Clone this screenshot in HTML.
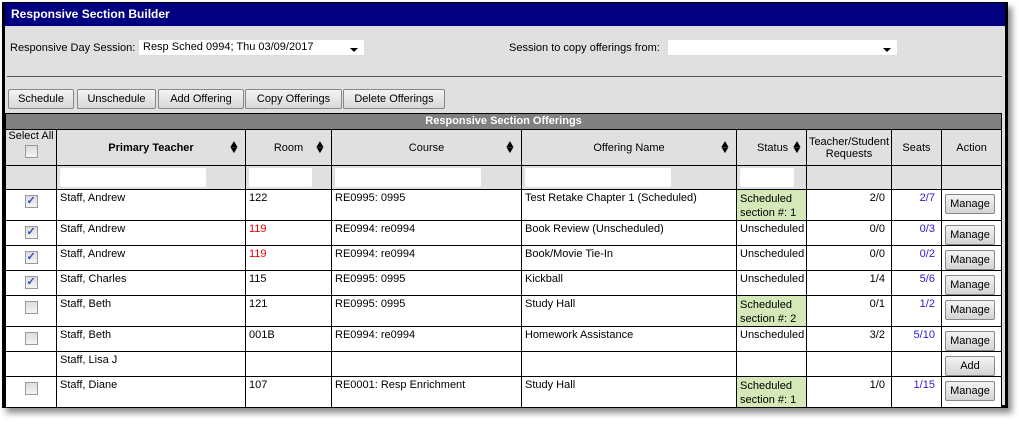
<!DOCTYPE html>
<html><head><style>
body{margin:0;width:1019px;height:424px;background:#fff;font-family:"Liberation Sans",Arial,sans-serif;font-size:11px;position:relative;overflow:hidden}
.frame{position:absolute;left:2px;top:2px;width:1000px;height:402px;border:3px solid #000;border-top:1px solid #000;background:#e0e0e0;box-shadow:4px 5px 6px rgba(0,0,0,.45)}
.title{position:absolute;left:0;top:0;width:1000px;height:23px;background:#000080;color:#fff;font-weight:bold;font-size:12px;line-height:23px;padding-left:6px;box-sizing:border-box}
.abs{position:absolute}
.sel{position:absolute;background:#fff;height:17px;line-height:15px;padding-left:4px;box-sizing:border-box;border:1px solid #ddd}
.sel:after{content:"";position:absolute;right:6px;top:8px;border:4px solid transparent;border-top:4px solid #000;border-bottom:0}
.btn{position:absolute;top:86px;height:20px;border:1px solid #888;border-radius:2px;background:linear-gradient(#f4f4f4,#d8d8d8);text-align:center;line-height:18px;box-sizing:border-box}
table{position:absolute;left:0;top:110px;border-collapse:collapse;table-layout:fixed;width:996px}
td,th{border:1px solid #000;padding:0 3px;vertical-align:top;overflow:hidden;white-space:nowrap}
th{font-weight:normal;vertical-align:middle;background:#e0e0e0;position:relative}
.band td{background:#808080;color:#fff;font-weight:bold;text-align:center;height:15px;line-height:15px;font-size:11px;border:1px solid #000}
.filt td{background:#e0e0e0;height:23px;vertical-align:middle}
.fi{background:#fff;height:19px;border-radius:2px}
tr.r td{background:#fff;padding-top:2px}
.cb{display:inline-block;width:11px;height:11px;border:1px solid #999;background:linear-gradient(#ddd,#f4f4f4);margin-top:3px;position:relative}
.cb.on:after{content:"✓";position:absolute;left:1px;top:-2px;color:#3050b0;font-size:11px;font-weight:bold}
.c{text-align:center}
.rt{text-align:right}
.red{color:#e00}
.blue{color:#2a1ad0}
.sch{background:#d4e8b8!important}
.mb{display:inline-block;width:48px;height:18px;border:1px solid #888;border-radius:2px;background:linear-gradient(#f4f4f4,#d4d4d4);text-align:center;line-height:18px;margin-top:2px}
.sort{position:absolute;right:6px;top:50%;margin-top:-6px;font-size:10px;line-height:6px;transform:scaleX(1.2)}
</style></head><body>
<div class="frame">
<div class="title">Responsive Section Builder</div>
<div class="abs" style="left:5px;top:39px">Responsive Day Session:</div>
<div class="sel" style="left:133px;top:36px;width:227px">Resp Sched 0994; Thu 03/09/2017</div>
<div class="abs" style="left:504px;top:39px">Session to copy offerings from:</div>
<div class="sel" style="left:662px;top:36px;width:231px"></div>
<div class="abs" style="left:2px;top:73px;width:995px;height:1px;background:#555"></div>
<div class="btn" style="left:3px;width:66px">Schedule</div>
<div class="btn" style="left:72px;width:79px">Unschedule</div>
<div class="btn" style="left:153px;width:86px">Add Offering</div>
<div class="btn" style="left:240px;width:97px">Copy Offerings</div>
<div class="btn" style="left:338px;width:102px">Delete Offerings</div>
<table>
<colgroup><col style="width:51px"><col style="width:189px"><col style="width:86px"><col style="width:190px"><col style="width:215px"><col style="width:70px"><col style="width:85px"><col style="width:50px"><col style="width:60px"></colgroup>
<tr class="band"><td colspan="9">Responsive Section Offerings</td></tr>
<tr style="height:36px"><th style="padding:0;vertical-align:top">Select All<br><span class="cb" style="margin-top:3px"></span></th>
<th style="font-weight:bold">Primary Teacher<span class="sort">▲<br>▼</span></th>
<th>Room<span class="sort">▲<br>▼</span></th>
<th>Course<span class="sort">▲<br>▼</span></th>
<th>Offering Name<span class="sort">▲<br>▼</span></th>
<th style="text-align:left;padding-left:20px">Status<span class="sort" style="right:4px">▲<br>▼</span></th>
<th style="padding:0">Teacher/Student<br>Requests</th>
<th>Seats</th><th>Action</th></tr>
<tr class="filt"><td></td><td><div class="fi" style="width:146px"></div></td><td><div class="fi" style="width:63px"></div></td><td><div class="fi" style="width:146px"></div></td><td><div class="fi" style="width:146px"></div></td><td><div class="fi" style="width:54px"></div></td><td></td><td></td><td></td></tr>
<tr class="r" style="height:31px"><td class="c"><span class="cb on"></span></td><td>Staff, Andrew</td><td>122</td><td>RE0995: 0995</td><td>Test Retake Chapter 1 (Scheduled)</td><td class="sch" style="line-height:14px;padding-top:2px">Scheduled<br>section #: 1</td><td class="rt">2/0&nbsp;</td><td class="rt blue">2/7&nbsp;</td><td><span class="mb">Manage</span></td></tr>
<tr class="r" style="height:25px"><td class="c"><span class="cb on"></span></td><td>Staff, Andrew</td><td class="red">119</td><td>RE0994: re0994</td><td>Book Review (Unscheduled)</td><td>Unscheduled</td><td class="rt">0/0&nbsp;</td><td class="rt blue">0/3&nbsp;</td><td><span class="mb">Manage</span></td></tr>
<tr class="r" style="height:25px"><td class="c"><span class="cb on"></span></td><td>Staff, Andrew</td><td class="red">119</td><td>RE0994: re0994</td><td>Book/Movie Tie-In</td><td>Unscheduled</td><td class="rt">0/0&nbsp;</td><td class="rt blue">0/2&nbsp;</td><td><span class="mb">Manage</span></td></tr>
<tr class="r" style="height:25px"><td class="c"><span class="cb on"></span></td><td>Staff, Charles</td><td>115</td><td>RE0995: 0995</td><td>Kickball</td><td>Unscheduled</td><td class="rt">1/4&nbsp;</td><td class="rt blue">5/6&nbsp;</td><td><span class="mb">Manage</span></td></tr>
<tr class="r" style="height:31px"><td class="c"><span class="cb"></span></td><td>Staff, Beth</td><td>121</td><td>RE0995: 0995</td><td>Study Hall</td><td class="sch" style="line-height:14px;padding-top:2px">Scheduled<br>section #: 2</td><td class="rt">0/1&nbsp;</td><td class="rt blue">1/2&nbsp;</td><td><span class="mb">Manage</span></td></tr>
<tr class="r" style="height:25px"><td class="c"><span class="cb"></span></td><td>Staff, Beth</td><td>001B</td><td>RE0994: re0994</td><td>Homework Assistance</td><td>Unscheduled</td><td class="rt">3/2&nbsp;</td><td class="rt blue">5/10&nbsp;</td><td><span class="mb">Manage</span></td></tr>
<tr class="r" style="height:25px"><td></td><td>Staff, Lisa J</td><td></td><td></td><td></td><td></td><td></td><td></td><td><span class="mb">Add</span></td></tr>
<tr class="r" style="height:29px"><td class="c"><span class="cb"></span></td><td>Staff, Diane</td><td>107</td><td>RE0001: Resp Enrichment</td><td>Study Hall</td><td class="sch" style="line-height:14px;padding-top:2px">Scheduled<br>section #: 1</td><td class="rt">1/0&nbsp;</td><td class="rt blue">1/15&nbsp;</td><td><span class="mb">Manage</span></td></tr>
</table>
</div>
</body></html>
